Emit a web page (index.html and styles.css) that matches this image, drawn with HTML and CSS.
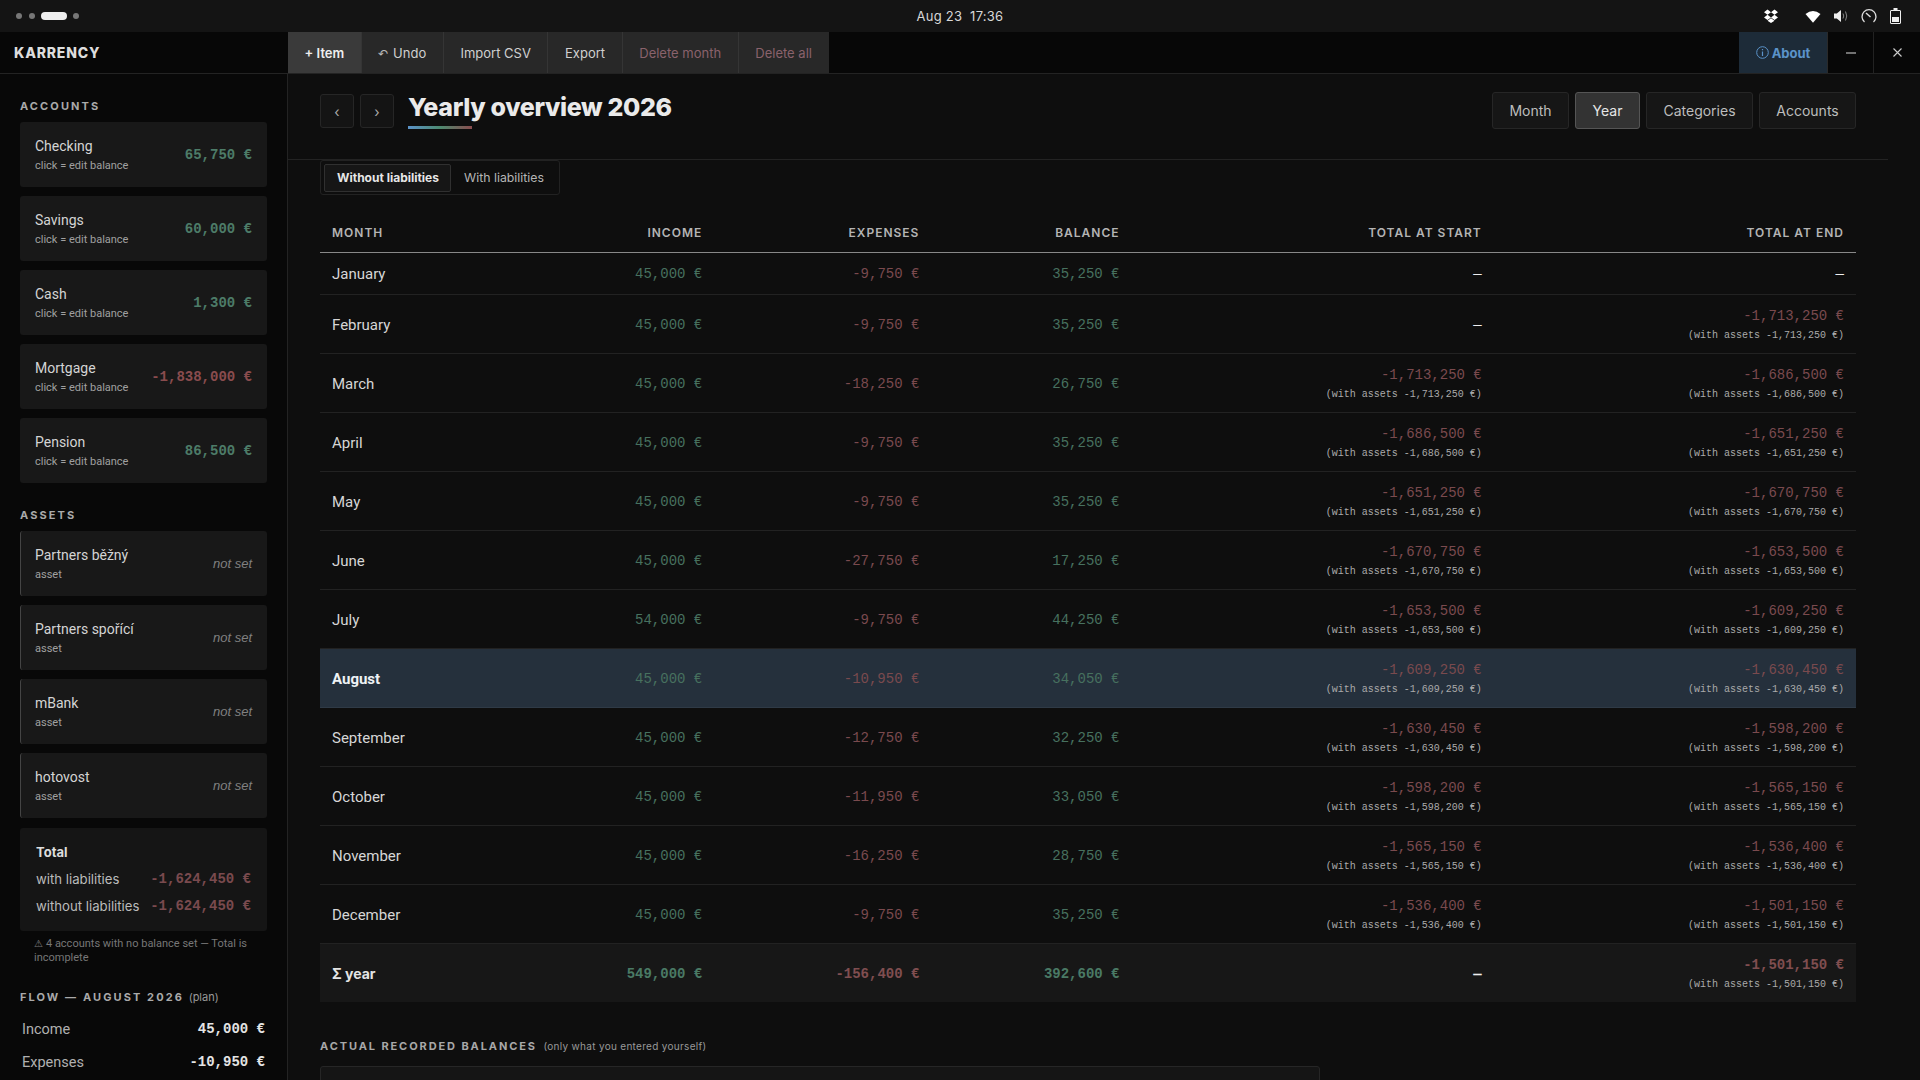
FILE: index.html
```html
<!DOCTYPE html>
<html lang="en">
<head>
<meta charset="utf-8">
<title>Karrency</title>
<link rel="stylesheet" href="styles.css">
</head>
<body>
<div class="sysbar">
  <div class="workspaces"><i class="dot"></i><i class="dot"></i><i class="pill"></i><i class="dot"></i></div>
  <div class="clock">Aug 23&nbsp;&nbsp;17:36</div>
  <div class="tray">
    <svg class="i-drop" width="14" height="14" viewBox="0 0 24 24"><path fill="#fff" d="M6 1 0 5.500 6 10l6-4.500zM18 1l-6 4.500L18 10l6-4.500zM0 14.500 6 19l6-4.500L6 10zM18 10l-6 4.500 6 4.500 6-4.500zM6 20l6 4 6-4-6-4z"/></svg>
    <svg class="i-wifi" width="16" height="13" viewBox="0 0 16 13"><path fill="#fff" d="M.5 4Q8-2.200 15.500 4L8 12.800z"/></svg>
    <svg class="i-vol" width="15" height="14" viewBox="0 0 15 14"><path fill="#eee" d="M0 4.500h2.800L7 1v12L2.800 9.500H0z"/><path fill="none" stroke="#888" d="M9 4.500q1.500 2.500 0 5M11.500 2.500q2.500 4.500 0 9"/></svg>
    <svg class="i-gauge" width="16" height="16" viewBox="0 0 16 16"><path fill="none" stroke="#ddd" stroke-width="1.300" d="M3.500 14A7 7 0 1 1 12.500 14"/><path stroke="#ddd" stroke-width="1.500" d="M5 5l4.500 4"/></svg>
    <svg class="i-batt" width="11" height="16" viewBox="0 0 11 16"><path fill="none" stroke="#eee" d="M1 2.500h9q.5 0 .5.500v12q0 .5-.5.500H1q-.5 0-.5-.500V3q0-.5.500-.5z"/><path fill="#eee" d="M3.500 0h4v2h-4zM2 9h7v5H2z"/></svg>
  </div>
</div>
<header class="appbar">
  <div class="brand">KARRENCY</div>
  <nav class="tools">
    <button class="tool tool-primary">+ Item</button>
    <button class="tool"><span class="undo">↶</span> Undo</button>
    <button class="tool">Import CSV</button>
    <button class="tool">Export</button>
    <button class="tool tool-danger">Delete month</button>
    <button class="tool tool-danger">Delete all</button>
  </nav>
  <div class="wincontrols">
    <button class="about"><svg width="13" height="13" viewBox="0 0 13 13"><circle cx="6.500" cy="6.500" r="5.800" fill="none" stroke="#5b93c9"/><path stroke="#5b93c9" stroke-width="1.200" d="M6.500 3v1.300M6.500 5.500V10"/></svg> About</button>
    <button class="win win-min"><svg width="10" height="2" viewBox="0 0 10 2"><path stroke="#bbb" stroke-width="1.200" d="M0 1h10"/></svg></button>
    <button class="win"><svg width="9" height="9" viewBox="0 0 9 9"><path stroke="#ccc" stroke-width="1.100" d="M.5.500l8 8M8.500.500l-8 8"/></svg></button>
  </div>
</header>
<div class="layout">
  <aside class="sidebar">
    <h3 class="side-label">ACCOUNTS</h3>
    <div class="card"><div><div class="card-name">Checking</div><div class="card-sub">click = edit balance</div></div><div class="card-val pos">65,750 €</div></div>
    <div class="card"><div><div class="card-name">Savings</div><div class="card-sub">click = edit balance</div></div><div class="card-val pos">60,000 €</div></div>
    <div class="card"><div><div class="card-name">Cash</div><div class="card-sub">click = edit balance</div></div><div class="card-val pos">1,300 €</div></div>
    <div class="card"><div><div class="card-name">Mortgage</div><div class="card-sub">click = edit balance</div></div><div class="card-val neg">-1,838,000 €</div></div>
    <div class="card"><div><div class="card-name">Pension</div><div class="card-sub">click = edit balance</div></div><div class="card-val pos">86,500 €</div></div>
    <h3 class="side-label side-label-assets">ASSETS</h3>
    <div class="card card-asset"><div><div class="card-name">Partners běžný</div><div class="card-sub">asset</div></div><div class="not-set">not set</div></div>
    <div class="card card-asset"><div><div class="card-name">Partners spořící</div><div class="card-sub">asset</div></div><div class="not-set">not set</div></div>
    <div class="card card-asset"><div><div class="card-name">mBank</div><div class="card-sub">asset</div></div><div class="not-set">not set</div></div>
    <div class="card card-asset"><div><div class="card-name">hotovost</div><div class="card-sub">asset</div></div><div class="not-set">not set</div></div>
    <div class="total">
      <div class="total-title">Total</div>
      <div class="total-row"><span>with liabilities</span><b class="neg">-1,624,450 €</b></div>
      <div class="total-row"><span>without liabilities</span><b class="neg">-1,624,450 €</b></div>
    </div>
    <p class="warn"><span class="warn-icon">⚠</span>4 accounts with no balance set — Total is incomplete</p>
    <h3 class="flow-label">FLOW — AUGUST 2026 <span>(plan)</span></h3>
    <div class="flow-row"><span>Income</span><b>45,000 €</b></div>
    <div class="flow-row"><span>Expenses</span><b>-10,950 €</b></div>
  </aside>
  <main class="main">
    <div class="page-head">
      <div class="pager"><button class="nav">‹</button><button class="nav">›</button></div>
      <div class="title-block"><h1 class="title">Yearly overview 2026</h1><div class="title-line"></div></div>
      <div class="views">
        <button class="view view-month">Month</button>
        <button class="view view-year view-on">Year</button>
        <button class="view view-cat">Categories</button>
        <button class="view view-acc">Accounts</button>
      </div>
    </div>
    <div class="content">
      <div class="segment"><button class="seg seg-on">Without liabilities</button><button class="seg">With liabilities</button></div>
      <table class="grid">
        <thead>
          <tr><th class="c-month">MONTH</th><th class="c-inc">INCOME</th><th class="c-exp">EXPENSES</th><th class="c-bal">BALANCE</th><th class="c-tot">TOTAL AT START</th><th class="c-tot">TOTAL AT END</th></tr>
        </thead>
        <tbody>
          <tr class="r-first"><td>January</td><td class="pos">45,000 €</td><td class="neg">-9,750 €</td><td class="pos">35,250 €</td><td class="dash">—</td><td class="dash">—</td></tr>
          <tr><td>February</td><td class="pos">45,000 €</td><td class="neg">-9,750 €</td><td class="pos">35,250 €</td><td class="dash">—</td><td class="neg">-1,713,250 €<small>(with assets -1,713,250 €)</small></td></tr>
          <tr><td>March</td><td class="pos">45,000 €</td><td class="neg">-18,250 €</td><td class="pos">26,750 €</td><td class="neg">-1,713,250 €<small>(with assets -1,713,250 €)</small></td><td class="neg">-1,686,500 €<small>(with assets -1,686,500 €)</small></td></tr>
          <tr><td>April</td><td class="pos">45,000 €</td><td class="neg">-9,750 €</td><td class="pos">35,250 €</td><td class="neg">-1,686,500 €<small>(with assets -1,686,500 €)</small></td><td class="neg">-1,651,250 €<small>(with assets -1,651,250 €)</small></td></tr>
          <tr><td>May</td><td class="pos">45,000 €</td><td class="neg">-9,750 €</td><td class="pos">35,250 €</td><td class="neg">-1,651,250 €<small>(with assets -1,651,250 €)</small></td><td class="neg">-1,670,750 €<small>(with assets -1,670,750 €)</small></td></tr>
          <tr><td>June</td><td class="pos">45,000 €</td><td class="neg">-27,750 €</td><td class="pos">17,250 €</td><td class="neg">-1,670,750 €<small>(with assets -1,670,750 €)</small></td><td class="neg">-1,653,500 €<small>(with assets -1,653,500 €)</small></td></tr>
          <tr><td>July</td><td class="pos">54,000 €</td><td class="neg">-9,750 €</td><td class="pos">44,250 €</td><td class="neg">-1,653,500 €<small>(with assets -1,653,500 €)</small></td><td class="neg">-1,609,250 €<small>(with assets -1,609,250 €)</small></td></tr>
          <tr class="r-now"><td>August</td><td class="pos">45,000 €</td><td class="neg">-10,950 €</td><td class="pos">34,050 €</td><td class="neg">-1,609,250 €<small>(with assets -1,609,250 €)</small></td><td class="neg">-1,630,450 €<small>(with assets -1,630,450 €)</small></td></tr>
          <tr><td>September</td><td class="pos">45,000 €</td><td class="neg">-12,750 €</td><td class="pos">32,250 €</td><td class="neg">-1,630,450 €<small>(with assets -1,630,450 €)</small></td><td class="neg">-1,598,200 €<small>(with assets -1,598,200 €)</small></td></tr>
          <tr><td>October</td><td class="pos">45,000 €</td><td class="neg">-11,950 €</td><td class="pos">33,050 €</td><td class="neg">-1,598,200 €<small>(with assets -1,598,200 €)</small></td><td class="neg">-1,565,150 €<small>(with assets -1,565,150 €)</small></td></tr>
          <tr><td>November</td><td class="pos">45,000 €</td><td class="neg">-16,250 €</td><td class="pos">28,750 €</td><td class="neg">-1,565,150 €<small>(with assets -1,565,150 €)</small></td><td class="neg">-1,536,400 €<small>(with assets -1,536,400 €)</small></td></tr>
          <tr><td>December</td><td class="pos">45,000 €</td><td class="neg">-9,750 €</td><td class="pos">35,250 €</td><td class="neg">-1,536,400 €<small>(with assets -1,536,400 €)</small></td><td class="neg">-1,501,150 €<small>(with assets -1,501,150 €)</small></td></tr>
          <tr class="r-sum"><td>Σ year</td><td class="pos">549,000 €</td><td class="neg">-156,400 €</td><td class="pos">392,600 €</td><td class="dash">—</td><td class="neg">-1,501,150 €<small>(with assets -1,501,150 €)</small></td></tr>
        </tbody>
      </table>
      <h3 class="rec-label">ACTUAL RECORDED BALANCES <span>(only what you entered yourself)</span></h3>
      <div class="rec-card"></div>
    </div>
  </main>
</div>
</body>
</html>
```
FILE: styles.css
```css
* { box-sizing: border-box; }
html, body { margin: 0; height: 100%; overflow: hidden; }
body { width: 1920px; height: 1080px; background: #0e0e0e; color: #ddd; font-family: Inter, "Noto Sans", sans-serif; display: flex; flex-direction: column; }
button { font: inherit; color: inherit; background: none; border: 0; padding: 0; }
h1, h3, p { margin: 0; }

.sysbar { height: 32px; flex: none; background: #141414; display: grid; grid-template-columns: 1fr auto 1fr; align-items: center; }
.workspaces { display: flex; align-items: center; padding-left: 16px; }
.dot { width: 6px; height: 6px; border-radius: 50%; background: #777; margin-right: 7px; }
.pill { width: 26px; height: 8px; border-radius: 4px; background: #eee; margin-right: 6px; margin-left: -1px; }
.clock { font-size: 13px; letter-spacing: .25px; color: #d8d8d8; }
.tray { display: flex; align-items: center; justify-content: flex-end; padding-right: 19px; }
.i-drop { margin-right: 27px; }
.i-wifi { margin-right: 13px; }
.i-vol { margin-right: 12px; }
.i-gauge { margin-right: 13px; }

.appbar { height: 42px; flex: none; background: #070707; border-bottom: 1px solid #232323; display: flex; }
.brand { width: 288px; padding-left: 14px; font-size: 14px; font-weight: 800; letter-spacing: .8px; color: #ddd; line-height: 41px; }
.tools { display: flex; flex: 1; }
.tool { height: 41px; padding: 0 16.600px; font-size: 13px; background: #282828; color: #d0d0d0; border-right: 1px solid #353535; }
.tool-primary { background: #3a3a3a; color: #eee; font-weight: 600; }
.tool-danger { color: #8a626c; }
.tool-danger:last-child { border-right: 0; }
.undo { font-size: 12px; color: #bbb; margin-right: 1px; }
.wincontrols { display: flex; }
.about { width: 89px; background: #1d2b38; color: #5b93c9; font-size: 13px; font-weight: 700; display: flex; align-items: center; justify-content: center; gap: 3px; height: 41px; border-right: 1px solid #2a2a2a; }
.win { width: 46px; height: 41px; display: flex; align-items: center; justify-content: center; }
.win-min { border-right: 1px solid #222; }

.layout { flex: 1; display: flex; min-height: 0; }
.sidebar { width: 288px; flex: none; background: #080808; border-right: 1px solid #232323; padding: 25px 20px 0; overflow: hidden; }
.side-label { font-size: 11px; font-weight: 700; letter-spacing: 2.100px; color: #aaa; line-height: 14px; margin-bottom: 9px; }
.side-label-assets { margin-top: 25px; margin-bottom: 9px; }
.card { height: 65px; background: #181818; border-radius: 3px; margin-bottom: 9px; padding: 0 15px; display: flex; justify-content: space-between; align-items: center; }
.card-asset { border-left: 1px solid #444; padding-left: 14px; }
.card-name { font-family: Roboto, sans-serif; font-size: 14px; color: #d4d4d4; line-height: 18px; }
.card-sub { font-family: Roboto, sans-serif; font-size: 11px; color: #a0a0a0; line-height: 14px; margin-top: 4px; }
.card-val { font-family: "Liberation Mono", monospace; font-size: 14px; font-weight: 700; }
.pos { color: #47715f; }
.neg { color: #7a4a4e; }
.card-val.pos { color: #4d7c68; }
.card-val.neg { color: #8a4c4e; }
.not-set { font-family: "Liberation Sans", sans-serif; font-style: italic; font-size: 13px; color: #808080; }
.total { height: 103px; margin-top: 10px; background: #151515; border-radius: 3px; padding: 15px 16px 0; }
.total-title { font-size: 13px; font-weight: 700; color: #ddd; line-height: 18px; margin-bottom: 9px; }
.total-row { display: flex; justify-content: space-between; font-size: 13.200px; color: #bbb; line-height: 18px; margin-bottom: 9px; }
.total-row b { font-family: "Liberation Mono", monospace; font-size: 14px; font-weight: 700; }
.warn { font-family: Roboto, sans-serif; font-size: 11px; color: #777; line-height: 14px; padding: 6px 14px 0; }
.warn-icon { display: inline-block; font-family: "DejaVu Sans", sans-serif; font-size: 10px; margin-right: 3px; }
.flow-label { margin-top: 25px; font-size: 11px; font-weight: 700; letter-spacing: 2.100px; color: #aaa; line-height: 14px; }
.flow-label span { font-weight: 400; letter-spacing: 0; color: #999; font-size: 11px; }
.flow-row { display: flex; justify-content: space-between; padding: 0 2px; font-family: Roboto, sans-serif; font-size: 14.500px; color: #b0b0b0; line-height: 33px; }
.flow-label + .flow-row { margin-top: 9px; }
.flow-row b { font-family: "Liberation Mono", monospace; font-size: 14px; color: #e4e4e4; font-weight: 700; }

.main { flex: 1; min-width: 0; overflow: hidden; }
.page-head { width: 1600px; height: 86px; border-bottom: 1px solid #232323; padding: 18px 32px 0; display: flex; align-items: flex-start; }
.pager { display: flex; gap: 6px; margin-top: 2px; margin-right: 14px; }
.nav { width: 34px; height: 34px; background: #141414; border: 1px solid #262626; border-radius: 3px; color: #aaa; font-size: 14px; }
.title-block { flex: 1; }
.title { font-size: 25px; font-weight: 800; letter-spacing: -.35px; color: #eaeaea; line-height: 30px; }
.title-line { width: 64px; height: 3px; margin-top: 4px; background: linear-gradient(90deg, #5b93c9, #4d8a70, #8a4c4e); }
.views { display: flex; gap: 6px; }
.view { height: 37px; font-size: 14px; background: #161616; border: 1px solid #262626; border-radius: 3px; color: #bdbdbd; }
.view-month { width: 77px; }
.view-year { width: 65px; }
.view-cat { width: 107px; }
.view-acc { width: 97px; }
.view-on { background: #333; border-color: #555; color: #e6e6e6; }

.content { width: 1600px; padding: 0 32px; }
.segment { display: inline-flex; height: 35px; padding: 3px; border: 1px solid #222; border-radius: 3px; gap: 0; }
.seg { padding: 0 10px 1px 11px; height: 28px; font-size: 12.300px; border: 1px solid transparent; border-radius: 2px; color: #b5b5b5; width: 105px; }
.seg-on { width: 127px; font-size: 12px; background: #161616; border-color: #303030; color: #e6e6e6; font-weight: 700; }

.grid { width: 1536px; table-layout: fixed; border-collapse: collapse; margin-top: 19px; }
.grid th { height: 38px; padding: 0 12px; font-size: 12px; font-weight: 600; letter-spacing: 1px; color: #b4b4b4; text-align: right; border-bottom: 1px solid #888; }
.grid th.c-month { text-align: left; width: 177px; }
.c-inc, .c-exp { width: 217px; }
.c-bal { width: 200px; }
.c-tot { width: 362px; }
.grid td { height: 59px; padding: 2px 12px 0; text-align: right; font-family: "Liberation Mono", monospace; font-size: 14px; line-height: 18px; border-bottom: 1px solid #222; }
.grid td:first-child { text-align: left; font-family: Roboto, sans-serif; font-size: 15px; color: #d6d6d6; }
.grid td small { display: block; font-size: 10px; line-height: 14px; margin-top: 4px; margin-bottom: -1px; color: #aaa; }
.grid td.dash { color: #eee; }
.r-first td { height: 42px; }
.r-now td { background: #25303c; border-bottom-color: #2f3a46; }
.grid .r-now td:first-child { font-weight: 700; color: #eef2f5; }
.r-sum td { background: #171717; font-weight: 700; border-bottom: 0; border-top: 1px solid #333; }
.grid .r-sum td:first-child { font-family: Inter, sans-serif; font-size: 14px; font-weight: 700; color: #e4e4e4; }
.r-sum td.pos { color: #4a7a65; }
.r-sum td.neg { color: #804e50; }
.grid .r-sum td small { font-weight: 400; }

.rec-label { margin-top: 37px; font-size: 11px; font-weight: 700; letter-spacing: 1.900px; color: #a8a8a8; line-height: 14px; }
.rec-label span { font-size: 10px; font-weight: 400; letter-spacing: .3px; color: #999; margin-left: 2px; }
.rec-card { width: 1000px; height: 200px; margin-top: 13px; background: #151515; border: 1px solid #262626; border-radius: 3px; }
```
